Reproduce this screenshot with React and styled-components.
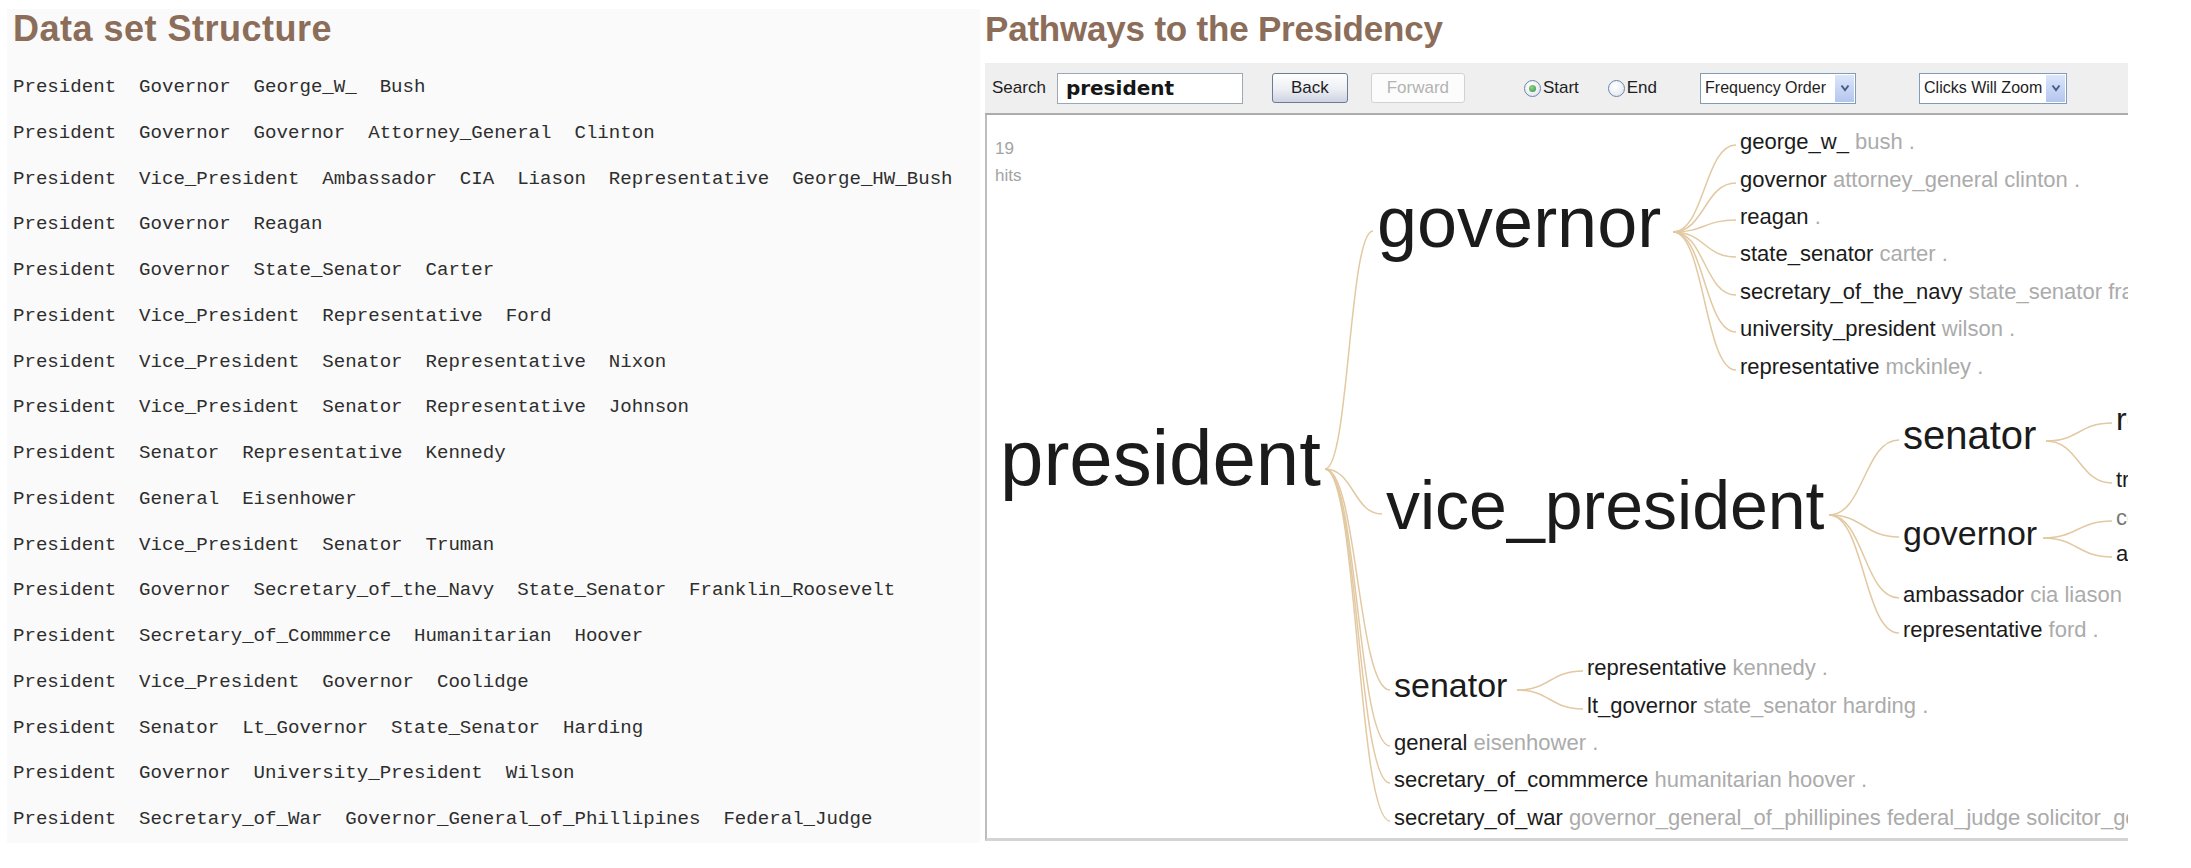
import styled, { createGlobalStyle } from "styled-components";

const Global = createGlobalStyle`
  body {
    margin: 0;
    background: #ffffff;
  }
`;

const Page = styled.div`
  display: flex;
  align-items: flex-start;
  width: 2191px;
  height: 868px;
  overflow: hidden;
`;

const LeftPanel = styled.section`
  width: 973px;
  height: 834px;
  margin: 9px 0 0 7px;
  padding-left: 6px;
  box-sizing: border-box;
  background: #fafafa;
`;

const Heading = styled.h2`
  margin: 0;
  height: 40px;
  font-family: "Liberation Sans", Arial, sans-serif;
  font-weight: bold;
  font-size: ${(p) => p.$size ?? 36}px;
  line-height: 40px;
  letter-spacing: ${(p) => p.$spacing ?? 0.5}px;
  color: #8b6d59;
  white-space: nowrap;
`;

const RowList = styled.div`
  display: flex;
  flex-direction: column;
  margin-top: 16px;
`;

const Row = styled.div`
  height: 45.75px;
  line-height: 45.75px;
  font-family: "Liberation Mono", "Courier New", monospace;
  font-size: 19.1px;
  color: #2e2e2e;
  white-space: pre;
`;

const RightPanel = styled.section`
  width: 1143px;
  margin: 9px 0 0 5px;
  display: flex;
  flex-direction: column;
`;

const Toolbar = styled.div`
  display: flex;
  align-items: center;
  height: 52px;
  margin-top: 14px;
  padding-left: 7px;
  box-sizing: border-box;
  background: #efefef;
  border-bottom: 2px solid #acacac;
  font-family: "Liberation Sans", Arial, sans-serif;
  font-size: 17px;
  color: #1e1e1e;
`;

const Label = styled.span`
  margin-left: ${(p) => p.$ml ?? 0}px;
`;

const SearchInput = styled.div`
  width: 186px;
  height: 31px;
  margin-left: 11px;
  padding-left: 8px;
  box-sizing: border-box;
  display: flex;
  align-items: center;
  border: 1px solid #9ea8b5;
  background: #ffffff;
  font-family: "DejaVu Sans", Verdana, sans-serif;
  font-weight: bold;
  font-size: 20px;
  color: #161616;
`;

const Button = styled.button`
  width: ${(p) => p.$w}px;
  height: 30px;
  margin-left: ${(p) => p.$ml}px;
  padding: 0;
  font-family: "Liberation Sans", Arial, sans-serif;
  font-size: 17px;
  color: ${(p) => (p.disabled ? "#b3b3b3" : "#1e1e1e")};
  border: 1px solid ${(p) => (p.disabled ? "#d2d2d2" : "#6c7b96")};
  border-radius: 3px;
  background: ${(p) =>
    p.disabled
      ? "#fcfcfc"
      : "linear-gradient(#ffffff, #eceef3 55%, #cdd3e0)"};
`;

const Radio = styled.label`
  display: flex;
  align-items: center;
  gap: 2px;
  margin-left: ${(p) => p.$ml}px;
`;

const RadioDot = styled.span`
  width: 17px;
  height: 17px;
  box-sizing: border-box;
  border-radius: 50%;
  border: 1px solid #6a86aa;
  background: radial-gradient(circle at 40% 35%, #ffffff, #dde2ea);
  display: flex;
  align-items: center;
  justify-content: center;

  &::after {
    content: "";
    width: 7px;
    height: 7px;
    border-radius: 50%;
    background: ${(p) =>
      p.$checked
        ? "radial-gradient(circle at 40% 35%, #8fd48f, #3b8f3b)"
        : "transparent"};
  }
`;

const Select = styled.div`
  display: flex;
  width: ${(p) => p.$w}px;
  height: 31px;
  margin-left: ${(p) => p.$ml}px;
  box-sizing: border-box;
  border: 1px solid #7f9db9;
  background: #ffffff;
  font-size: 16px;
`;

const SelectText = styled.span`
  flex: 1;
  display: flex;
  align-items: center;
  padding-left: 4px;
  white-space: nowrap;
  overflow: hidden;
`;

const SelectArrow = styled.span`
  width: 19px;
  display: flex;
  align-items: center;
  justify-content: center;
  border: 1px solid #ffffff;
  background: linear-gradient(#dce6fb, #b4c6ee);
`;

const TreeArea = styled.div`
  position: relative;
  height: 723px;
  overflow: hidden;
  background: #ffffff;
  border-left: 2px solid #bdbdbd;
  border-bottom: 3px solid #d4d4d4;
`;

const Edges = styled.svg`
  position: absolute;
  left: 0;
  top: 0;
`;

const Hits = styled.div`
  position: absolute;
  left: 8px;
  top: 20px;
  font-family: "Liberation Sans", Arial, sans-serif;
  font-size: 17px;
  line-height: 27px;
  color: #a3a3a3;
`;

const Node = styled.div`
  position: absolute;
  left: ${(p) => p.$x}px;
  top: ${(p) => p.$top}px;
  font-family: "Liberation Sans", Arial, sans-serif;
  font-size: ${(p) => p.$size}px;
  line-height: 1;
  white-space: nowrap;
  color: ${(p) => p.$color ?? "#1b1b1b"};
`;

const Rest = styled.span`
  color: #ababab;
`;

// page coordinates of the tree area's top-left corner
const OX = 987;
const OY = 117;

const rows = [
  "President  Governor  George_W_  Bush",
  "President  Governor  Governor  Attorney_General  Clinton",
  "President  Vice_President  Ambassador  CIA  Liason  Representative  George_HW_Bush",
  "President  Governor  Reagan",
  "President  Governor  State_Senator  Carter",
  "President  Vice_President  Representative  Ford",
  "President  Vice_President  Senator  Representative  Nixon",
  "President  Vice_President  Senator  Representative  Johnson",
  "President  Senator  Representative  Kennedy",
  "President  General  Eisenhower",
  "President  Vice_President  Senator  Truman",
  "President  Governor  Secretary_of_the_Navy  State_Senator  Franklin_Roosevelt",
  "President  Secretary_of_Commmerce  Humanitarian  Hoover",
  "President  Vice_President  Governor  Coolidge",
  "President  Senator  Lt_Governor  State_Senator  Harding",
  "President  Governor  University_President  Wilson",
  "President  Secretary_of_War  Governor_General_of_Phillipines  Federal_Judge",
];

// x, y = left edge and middle of the x-height, in page coordinates
const nodes = [
  { x: 1000, y: 467, size: 78, main: "president" },
  { x: 1377, y: 230, size: 72, main: "governor" },
  { x: 1386, y: 513, size: 68, main: "vice_president" },
  { x: 1394, y: 690, size: 34, main: "senator" },

  { x: 1740, y: 146, size: 22, main: "george_w_", rest: "bush ." },
  { x: 1740, y: 184, size: 22, main: "governor", rest: "attorney_general clinton ." },
  { x: 1740, y: 221, size: 22, main: "reagan", rest: "." },
  { x: 1740, y: 258, size: 22, main: "state_senator", rest: "carter ." },
  { x: 1740, y: 296, size: 22, main: "secretary_of_the_navy", rest: "state_senator franklin_roosevelt ." },
  { x: 1740, y: 333, size: 22, main: "university_president", rest: "wilson ." },
  { x: 1740, y: 371, size: 22, main: "representative", rest: "mckinley ." },

  { x: 1903, y: 441, size: 40, main: "senator" },
  { x: 1903, y: 538, size: 34, main: "governor" },
  { x: 1903, y: 599, size: 22, main: "ambassador", rest: "cia liason representative george_hw_bush ." },
  { x: 1903, y: 634, size: 22, main: "representative", rest: "ford ." },

  { x: 2116, y: 424, size: 32, main: "representative" },
  { x: 2116, y: 484, size: 22, main: "truman", rest: "." },
  { x: 2116, y: 522, size: 22, main: "coolidge", rest: ".", color: "#777" },
  { x: 2116, y: 558, size: 22, main: "agnew", rest: "." },

  { x: 1587, y: 672, size: 22, main: "representative", rest: "kennedy ." },
  { x: 1587, y: 710, size: 22, main: "lt_governor", rest: "state_senator harding ." },

  { x: 1394, y: 747, size: 22, main: "general", rest: "eisenhower ." },
  { x: 1394, y: 784, size: 22, main: "secretary_of_commmerce", rest: "humanitarian hoover ." },
  { x: 1394, y: 822, size: 22, main: "secretary_of_war", rest: "governor_general_of_phillipines federal_judge solicitor_general taft ." },
];

// parent anchor (right end of word) -> child left edges
const edges = [
  { from: [1325, 471], to: [[1373, 233], [1382, 516], [1390, 692], [1390, 748], [1390, 785], [1390, 823]] },
  { from: [1673, 234], to: [[1736, 147], [1736, 185], [1736, 222], [1736, 259], [1736, 297], [1736, 334], [1736, 372]] },
  { from: [1829, 517], to: [[1899, 442], [1899, 539], [1899, 600], [1899, 635]] },
  { from: [2046, 443], to: [[2112, 425], [2112, 485]] },
  { from: [2043, 540], to: [[2112, 523], [2112, 559]] },
  { from: [1517, 692], to: [[1583, 673], [1583, 711]] },
];

const curve = ([x1, y1], [x2, y2]) => {
  const a = x1 - OX;
  const b = y1 - OY;
  const c = x2 - OX;
  const d = y2 - OY;
  const m = (a + c) / 2;
  return `M${a} ${b} C${m} ${b} ${m} ${d} ${c} ${d}`;
};

const Chevron = () => (
  <svg width="10" height="8" viewBox="0 0 10 8">
    <polyline points="1.5,1.5 5,6 8.5,1.5" fill="none" stroke="#4a5f86" strokeWidth="2" />
  </svg>
);

const App = () => {
  return (
    <>
      <Global />
      <Page>
        <LeftPanel>
          <Heading>Data set Structure</Heading>
          <RowList>
            {rows.map((r) => (
              <Row key={r}>{r}</Row>
            ))}
          </RowList>
        </LeftPanel>

        <RightPanel>
          <Heading $size={35} $spacing={-0.2}>
            Pathways to the Presidency
          </Heading>
          <Toolbar>
            <Label>Search</Label>
            <SearchInput>president</SearchInput>
            <Button $w={76} $ml={29}>Back</Button>
            <Button $w={94} $ml={23} disabled>
              Forward
            </Button>
            <Radio $ml={59}>
              <RadioDot $checked />
              Start
            </Radio>
            <Radio $ml={29}>
              <RadioDot />
              End
            </Radio>
            <Select $w={156} $ml={43}>
              <SelectText>Frequency Order</SelectText>
              <SelectArrow>
                <Chevron />
              </SelectArrow>
            </Select>
            <Select $w={148} $ml={63}>
              <SelectText>Clicks Will Zoom</SelectText>
              <SelectArrow>
                <Chevron />
              </SelectArrow>
            </Select>
          </Toolbar>

          <TreeArea>
            <Edges width="1141" height="723">
              {edges.map((e, i) =>
                e.to.map((t, j) => (
                  <path
                    key={`${i}-${j}`}
                    d={curve(e.from, t)}
                    fill="none"
                    stroke="#e2c9a2"
                    strokeWidth="1.5"
                  />
                ))
              )}
            </Edges>
            <Hits>
              19
              <br />
              hits
            </Hits>
            {nodes.map((n, i) => (
              <Node
                key={i}
                $x={n.x - OX}
                $top={Math.round(n.y - OY - n.size * 0.59)}
                $size={n.size}
                $color={n.color}
              >
                {n.main}
                {n.rest && <Rest> {n.rest}</Rest>}
              </Node>
            ))}
          </TreeArea>
        </RightPanel>
      </Page>
    </>
  );
};

export default App;
